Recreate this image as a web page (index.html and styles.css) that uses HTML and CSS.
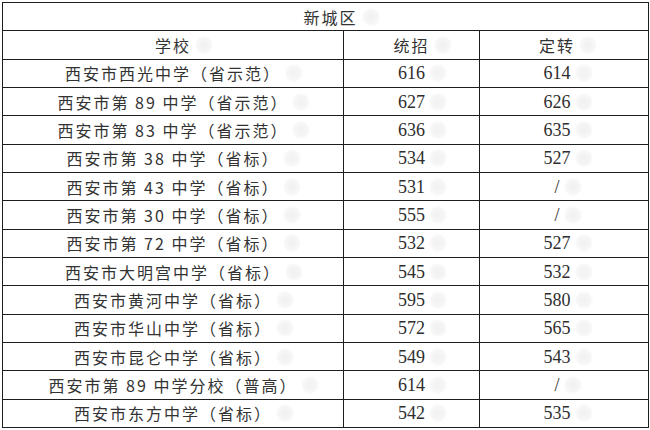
FILE: index.html
```html
<!DOCTYPE html>
<html lang="zh-CN">
<head>
<meta charset="utf-8">
<title>新城区</title>
<link rel="stylesheet" href="styles.css">
</head>
<body>
<table class="score">
  <colgroup>
    <col class="c-school">
    <col class="c-tz">
    <col class="c-dz">
  </colgroup>
  <tr><th colspan="3" class="district"><span class="t">新城区</span></th></tr>
  <tr><th><span class="t">学校</span></th><th><span class="t">统招</span></th><th class="third"><span class="t">定转</span></th></tr>
  <tr><td><span class="t">西安市西光中学（省示范）</span></td><td class="num"><span class="t">616</span></td><td class="num third"><span class="t">614</span></td></tr>
  <tr><td><span class="t">西安市第 89 中学（省示范）</span></td><td class="num"><span class="t">627</span></td><td class="num third"><span class="t">626</span></td></tr>
  <tr><td><span class="t">西安市第 83 中学（省示范）</span></td><td class="num"><span class="t">636</span></td><td class="num third"><span class="t">635</span></td></tr>
  <tr><td><span class="t">西安市第 38 中学（省标）</span></td><td class="num"><span class="t">534</span></td><td class="num third"><span class="t">527</span></td></tr>
  <tr><td><span class="t">西安市第 43 中学（省标）</span></td><td class="num"><span class="t">531</span></td><td class="num third"><span class="t">/</span></td></tr>
  <tr><td><span class="t">西安市第 30 中学（省标）</span></td><td class="num"><span class="t">555</span></td><td class="num third"><span class="t">/</span></td></tr>
  <tr><td><span class="t">西安市第 72 中学（省标）</span></td><td class="num"><span class="t">532</span></td><td class="num third"><span class="t">527</span></td></tr>
  <tr><td><span class="t">西安市大明宫中学（省标）</span></td><td class="num"><span class="t">545</span></td><td class="num third"><span class="t">532</span></td></tr>
  <tr><td><span class="t">西安市黄河中学（省标）</span></td><td class="num"><span class="t">595</span></td><td class="num third"><span class="t">580</span></td></tr>
  <tr><td><span class="t">西安市华山中学（省标）</span></td><td class="num"><span class="t">572</span></td><td class="num third"><span class="t">565</span></td></tr>
  <tr><td><span class="t">西安市昆仑中学（省标）</span></td><td class="num"><span class="t">549</span></td><td class="num third"><span class="t">543</span></td></tr>
  <tr><td><span class="t">西安市第 89 中学分校（普高）</span></td><td class="num"><span class="t">614</span></td><td class="num third"><span class="t">/</span></td></tr>
  <tr><td><span class="t">西安市东方中学（省标）</span></td><td class="num"><span class="t">542</span></td><td class="num third"><span class="t">535</span></td></tr>
</table>
</body>
</html>
```
FILE: styles.css
```css
html, body {
  margin: 0;
  padding: 0;
  background: #ffffff;
}
body {
  padding: 2px 0 0 2px;
}
.score {
  border-collapse: collapse;
  table-layout: fixed;
  width: 646px;
  height: 426px;
  font-family: "Noto Sans CJK SC", "Noto Sans", sans-serif;
  font-size: 16px;
  color: #333333;
}
.c-school { width: 341px; }
.c-tz { width: 136px; }
.c-dz { width: 169px; }
.score th,
.score td {
  border: 1px solid #1e1e1e;
  padding: 0;
  text-align: center;
  vertical-align: middle;
  font-weight: normal;
  line-height: 20px;
  letter-spacing: 2px;
}
.score th.district {
  padding-left: 10px;
}
.score .third {
  padding-right: 14px;
}
.score td.num {
  font-family: "Liberation Serif", "DejaVu Serif", serif;
  font-size: 18px;
  letter-spacing: 0;
  color: #2e2e2e;
}
.t {
  position: relative;
}
.t::after {
  content: "";
  position: absolute;
  left: 100%;
  top: 50%;
  width: 18px;
  height: 20px;
  margin-left: 4px;
  margin-top: -10px;
  border-radius: 50%;
  background: radial-gradient(circle, #f1f1f1 0%, #f6f6f6 50%, rgba(255,255,255,0) 72%);
}
```
